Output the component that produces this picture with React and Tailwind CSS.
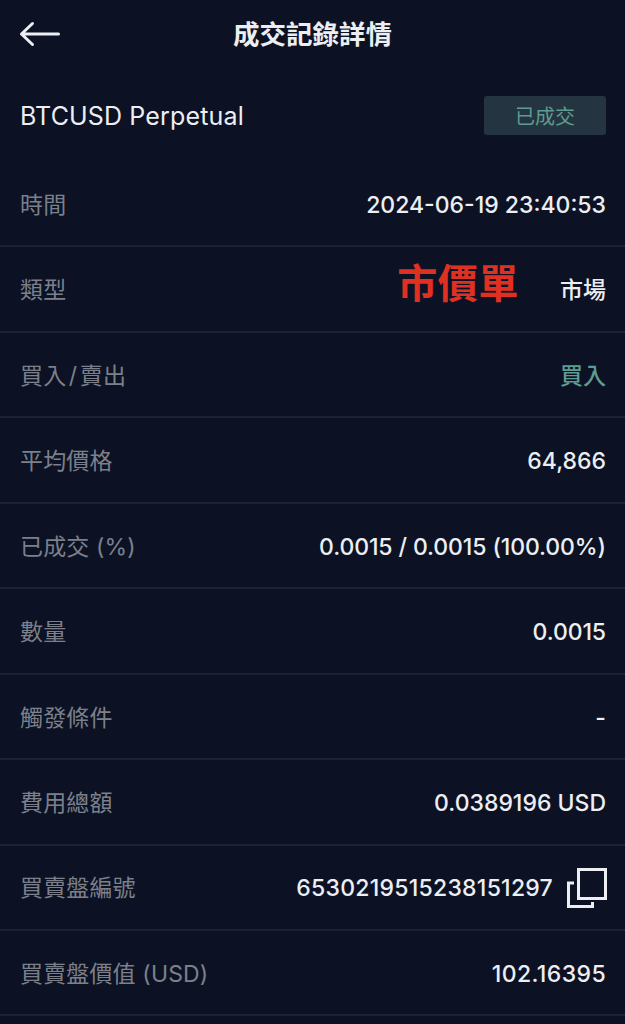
import React from 'react';
import clsx from 'clsx';

const rows = [
    { label: '時間', value: '2024-06-19 23:40:53' },
    { label: '類型', value: '市場', note: '市價單' },
    { label: ['買入', '賣出'], value: '買入', valueClass: 'text-[#5d9c90]' },
    { label: '平均價格', value: '64,866' },
    { label: '已成交 (%)', value: '0.0015 / 0.0015 (100.00%)', valueClass: 'tracking-[-0.1px]' },
    { label: '數量', value: '0.0015', valueClass: 'tracking-[-0.1px]' },
    { label: '觸發條件', value: '-' },
    { label: '費用總額', value: '0.0389196 USD' },
    { label: '買賣盤編號', value: '6530219515238151297', valueClass: 'tracking-[0.25px]', copy: true },
    { label: '買賣盤價值 (USD)', value: '102.16395', valueClass: 'tracking-[0.4px]' },
];

function BackIcon() {
    return (
        <svg className="block" width="42" height="26" viewBox="0 0 42 26" fill="none" stroke="currentColor" strokeWidth="3" strokeLinecap="round" strokeLinejoin="round">
            <path d="M13.5 2.5 2.5 13l11 10.5M2.5 13h37" />
        </svg>
    );
}

function CopyIcon() {
    return (
        <svg className="block" width="40" height="40" viewBox="0 0 40 40" fill="none" stroke="currentColor" strokeWidth="3">
            <rect x="11.5" y="1.5" width="27" height="29" />
            <path d="M7 15H1.5v23.5h24v-4.5" />
        </svg>
    );
}

function DetailRow({ row }) {
    return (
        <div className="flex h-[85.45px] items-center justify-between border-b-2 border-[#1c2233] pt-[3px] pl-5 pr-[19px] text-[23px]">
            <span className="tracking-[0.15px] text-[#7b808b]">
                {Array.isArray(row.label) ? (
                    <>
                        {row.label[0]}
                        <span className="mx-[2.5px]">/</span>
                        {row.label[1]}
                    </>
                ) : (
                    row.label
                )}
            </span>
            <div className="flex items-center">
                {row.note && (
                    <span className="relative -top-[7px] mr-[41px] text-[40px] leading-none font-bold tracking-[0.6px] text-[#e03022]">
                        {row.note}
                    </span>
                )}
                <span className={clsx('font-medium', row.valueClass)}>{row.value}</span>
                {row.copy && (
                    <button className="-mt-px -mr-px ml-[14px]">
                        <CopyIcon />
                    </button>
                )}
            </div>
        </div>
    );
}

export default function App() {
    return (
        <div className="h-[1024px] w-[625px] overflow-hidden bg-[#0c1224] font-['Inter','Noto_Sans_CJK_TC',sans-serif] text-[#eceef2]">
            <header className="grid h-[68px] grid-cols-[1fr_auto_1fr] items-center px-[19px]">
                <button className="justify-self-start">
                    <BackIcon />
                </button>
                <h1 className="pt-[2px] text-[26.5px] font-bold">成交記錄詳情</h1>
            </header>

            <div className="flex h-[94px] items-center justify-between pl-5 pr-[19px]">
                <h2 className="pt-[4px] text-[25px] tracking-[0.15px]">BTCUSD Perpetual</h2>
                <span className="flex h-[39px] w-[122px] items-center justify-center rounded-[3px] bg-[#243440] pt-[3px] text-[20px] text-[#5d9c90]">
                    已成交
                </span>
            </div>

            {rows.map((row) => (
                <DetailRow key={row.value} row={row} />
            ))}
        </div>
    );
}
